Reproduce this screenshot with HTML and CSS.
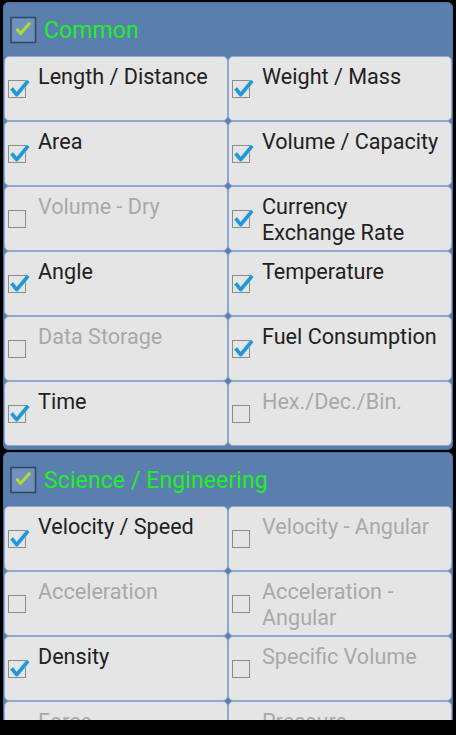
FILE: index.html
```html
<!DOCTYPE html>
<html>
<head>
<meta charset="utf-8">
<link rel="stylesheet" href="styles.css">
</head>
<body>
<div class="screen">
  <section class="group">
    <header class="group-head">
      <svg class="head-box" width="27" height="28" viewBox="0 0 27 28"><rect x="1" y="1.5" width="24.5" height="25" fill="#6e91c0" stroke="#35495f" stroke-width="1.6"/><path d="M6.5 12.8 L10.6 17.6 L20 6.8" fill="none" stroke="#b2dc2a" stroke-width="3" stroke-linejoin="round"/></svg>
      <h2 class="group-title">Common</h2>
    </header>
    <div class="grid">
      <div class="cell on"><svg class="cb" width="22" height="20" viewBox="0 0 22 20"><rect x="0.5" y="1.5" width="17" height="17" fill="none" stroke="#8c8c8c"/><path d="M3.6 9.4 L8.7 15.6 L20.2 1.8" fill="none" stroke="#9fd3f0" stroke-width="5" stroke-linejoin="round" opacity="0.5"/><path d="M3.6 9.4 L8.7 15.6 L20.2 1.8" fill="none" stroke="#1c98d6" stroke-width="3.4" stroke-linejoin="round"/></svg><span class="label">Length / Distance</span></div>
      <div class="cell on"><svg class="cb" width="22" height="20" viewBox="0 0 22 20"><rect x="0.5" y="1.5" width="17" height="17" fill="none" stroke="#8c8c8c"/><path d="M3.6 9.4 L8.7 15.6 L20.2 1.8" fill="none" stroke="#9fd3f0" stroke-width="5" stroke-linejoin="round" opacity="0.5"/><path d="M3.6 9.4 L8.7 15.6 L20.2 1.8" fill="none" stroke="#1c98d6" stroke-width="3.4" stroke-linejoin="round"/></svg><span class="label">Weight / Mass</span></div>
      <div class="cell on"><svg class="cb" width="22" height="20" viewBox="0 0 22 20"><rect x="0.5" y="1.5" width="17" height="17" fill="none" stroke="#8c8c8c"/><path d="M3.6 9.4 L8.7 15.6 L20.2 1.8" fill="none" stroke="#9fd3f0" stroke-width="5" stroke-linejoin="round" opacity="0.5"/><path d="M3.6 9.4 L8.7 15.6 L20.2 1.8" fill="none" stroke="#1c98d6" stroke-width="3.4" stroke-linejoin="round"/></svg><span class="label">Area</span></div>
      <div class="cell on"><svg class="cb" width="22" height="20" viewBox="0 0 22 20"><rect x="0.5" y="1.5" width="17" height="17" fill="none" stroke="#8c8c8c"/><path d="M3.6 9.4 L8.7 15.6 L20.2 1.8" fill="none" stroke="#9fd3f0" stroke-width="5" stroke-linejoin="round" opacity="0.5"/><path d="M3.6 9.4 L8.7 15.6 L20.2 1.8" fill="none" stroke="#1c98d6" stroke-width="3.4" stroke-linejoin="round"/></svg><span class="label">Volume / Capacity</span></div>
      <div class="cell off"><svg class="cb" width="22" height="20" viewBox="0 0 22 20"><rect x="0.5" y="1.5" width="17" height="17" fill="none" stroke="#8c8c8c"/></svg><span class="label">Volume - Dry</span></div>
      <div class="cell on"><svg class="cb" width="22" height="20" viewBox="0 0 22 20"><rect x="0.5" y="1.5" width="17" height="17" fill="none" stroke="#8c8c8c"/><path d="M3.6 9.4 L8.7 15.6 L20.2 1.8" fill="none" stroke="#9fd3f0" stroke-width="5" stroke-linejoin="round" opacity="0.5"/><path d="M3.6 9.4 L8.7 15.6 L20.2 1.8" fill="none" stroke="#1c98d6" stroke-width="3.4" stroke-linejoin="round"/></svg><span class="label">Currency<br>Exchange Rate</span></div>
      <div class="cell on"><svg class="cb" width="22" height="20" viewBox="0 0 22 20"><rect x="0.5" y="1.5" width="17" height="17" fill="none" stroke="#8c8c8c"/><path d="M3.6 9.4 L8.7 15.6 L20.2 1.8" fill="none" stroke="#9fd3f0" stroke-width="5" stroke-linejoin="round" opacity="0.5"/><path d="M3.6 9.4 L8.7 15.6 L20.2 1.8" fill="none" stroke="#1c98d6" stroke-width="3.4" stroke-linejoin="round"/></svg><span class="label">Angle</span></div>
      <div class="cell on"><svg class="cb" width="22" height="20" viewBox="0 0 22 20"><rect x="0.5" y="1.5" width="17" height="17" fill="none" stroke="#8c8c8c"/><path d="M3.6 9.4 L8.7 15.6 L20.2 1.8" fill="none" stroke="#9fd3f0" stroke-width="5" stroke-linejoin="round" opacity="0.5"/><path d="M3.6 9.4 L8.7 15.6 L20.2 1.8" fill="none" stroke="#1c98d6" stroke-width="3.4" stroke-linejoin="round"/></svg><span class="label">Temperature</span></div>
      <div class="cell off"><svg class="cb" width="22" height="20" viewBox="0 0 22 20"><rect x="0.5" y="1.5" width="17" height="17" fill="none" stroke="#8c8c8c"/></svg><span class="label">Data Storage</span></div>
      <div class="cell on"><svg class="cb" width="22" height="20" viewBox="0 0 22 20"><rect x="0.5" y="1.5" width="17" height="17" fill="none" stroke="#8c8c8c"/><path d="M3.6 9.4 L8.7 15.6 L20.2 1.8" fill="none" stroke="#9fd3f0" stroke-width="5" stroke-linejoin="round" opacity="0.5"/><path d="M3.6 9.4 L8.7 15.6 L20.2 1.8" fill="none" stroke="#1c98d6" stroke-width="3.4" stroke-linejoin="round"/></svg><span class="label">Fuel Consumption</span></div>
      <div class="cell on"><svg class="cb" width="22" height="20" viewBox="0 0 22 20"><rect x="0.5" y="1.5" width="17" height="17" fill="none" stroke="#8c8c8c"/><path d="M3.6 9.4 L8.7 15.6 L20.2 1.8" fill="none" stroke="#9fd3f0" stroke-width="5" stroke-linejoin="round" opacity="0.5"/><path d="M3.6 9.4 L8.7 15.6 L20.2 1.8" fill="none" stroke="#1c98d6" stroke-width="3.4" stroke-linejoin="round"/></svg><span class="label">Time</span></div>
      <div class="cell off"><svg class="cb" width="22" height="20" viewBox="0 0 22 20"><rect x="0.5" y="1.5" width="17" height="17" fill="none" stroke="#8c8c8c"/></svg><span class="label">Hex./Dec./Bin.</span></div>
    </div>
  </section>

  <section class="group">
    <header class="group-head">
      <svg class="head-box" width="27" height="28" viewBox="0 0 27 28"><rect x="1" y="1.5" width="24.5" height="25" fill="#6e91c0" stroke="#35495f" stroke-width="1.6"/><path d="M6.5 12.8 L10.6 17.6 L20 6.8" fill="none" stroke="#b2dc2a" stroke-width="3" stroke-linejoin="round"/></svg>
      <h2 class="group-title">Science / Engineering</h2>
    </header>
    <div class="grid">
      <div class="cell on"><svg class="cb" width="22" height="20" viewBox="0 0 22 20"><rect x="0.5" y="1.5" width="17" height="17" fill="none" stroke="#8c8c8c"/><path d="M3.6 9.4 L8.7 15.6 L20.2 1.8" fill="none" stroke="#9fd3f0" stroke-width="5" stroke-linejoin="round" opacity="0.5"/><path d="M3.6 9.4 L8.7 15.6 L20.2 1.8" fill="none" stroke="#1c98d6" stroke-width="3.4" stroke-linejoin="round"/></svg><span class="label">Velocity / Speed</span></div>
      <div class="cell off"><svg class="cb" width="22" height="20" viewBox="0 0 22 20"><rect x="0.5" y="1.5" width="17" height="17" fill="none" stroke="#8c8c8c"/></svg><span class="label">Velocity - Angular</span></div>
      <div class="cell off"><svg class="cb" width="22" height="20" viewBox="0 0 22 20"><rect x="0.5" y="1.5" width="17" height="17" fill="none" stroke="#8c8c8c"/></svg><span class="label">Acceleration</span></div>
      <div class="cell off"><svg class="cb" width="22" height="20" viewBox="0 0 22 20"><rect x="0.5" y="1.5" width="17" height="17" fill="none" stroke="#8c8c8c"/></svg><span class="label">Acceleration -<br>Angular</span></div>
      <div class="cell on"><svg class="cb" width="22" height="20" viewBox="0 0 22 20"><rect x="0.5" y="1.5" width="17" height="17" fill="none" stroke="#8c8c8c"/><path d="M3.6 9.4 L8.7 15.6 L20.2 1.8" fill="none" stroke="#9fd3f0" stroke-width="5" stroke-linejoin="round" opacity="0.5"/><path d="M3.6 9.4 L8.7 15.6 L20.2 1.8" fill="none" stroke="#1c98d6" stroke-width="3.4" stroke-linejoin="round"/></svg><span class="label">Density</span></div>
      <div class="cell off"><svg class="cb" width="22" height="20" viewBox="0 0 22 20"><rect x="0.5" y="1.5" width="17" height="17" fill="none" stroke="#8c8c8c"/></svg><span class="label">Specific Volume</span></div>
      <div class="cell off"><svg class="cb" width="22" height="20" viewBox="0 0 22 20"><rect x="0.5" y="1.5" width="17" height="17" fill="none" stroke="#8c8c8c"/></svg><span class="label">Force</span></div>
      <div class="cell off"><svg class="cb" width="22" height="20" viewBox="0 0 22 20"><rect x="0.5" y="1.5" width="17" height="17" fill="none" stroke="#8c8c8c"/></svg><span class="label">Pressure</span></div>
    </div>
  </section>
</div>
</body>
</html>
```
FILE: styles.css
```css
html, body {
  margin: 0;
  padding: 0;
  background: #000;
}
body {
  font-family: Roboto, "Noto Sans", sans-serif;
}
.screen {
  overflow: hidden;
  padding: 2px 3px 0 3px;
  box-sizing: border-box;
  height: 720px;
}
.group {
  background: #5a7fae;
  border-radius: 6px;
  padding: 0 1px 4px 1px;
  margin-bottom: 2px;
  box-shadow: inset 0 0 0 1px #4d6f9c;
}
.group-head {
  height: 54px;
  display: flex;
  align-items: center;
  padding-left: 6px;
  gap: 7px;
}
.head-box {
  display: block;
  flex: none;
  margin-top: 2px;
}
.group-title {
  margin: 0;
  font-weight: normal;
  font-size: 23px;
  color: #1ff01f;
  letter-spacing: 0.1px;
  position: relative;
  top: 1px;
}
.grid {
  display: grid;
  grid-template-columns: 224px 224px;
  grid-auto-rows: 65px;
}
.cell {
  background: #e5e5e5;
  border: 1px solid #8ea8cf;
  border-radius: 5px;
  display: flex;
  align-items: flex-start;
  padding: 7px 4px 0 3px;
  gap: 8px;
}
.cb {
  display: block;
  flex: none;
  margin-top: 15px;
}
.label {
  font-size: 21.6px;
  line-height: 26px;
  color: #212121;
}
.off .label {
  color: #a9a9a9;
}
```
